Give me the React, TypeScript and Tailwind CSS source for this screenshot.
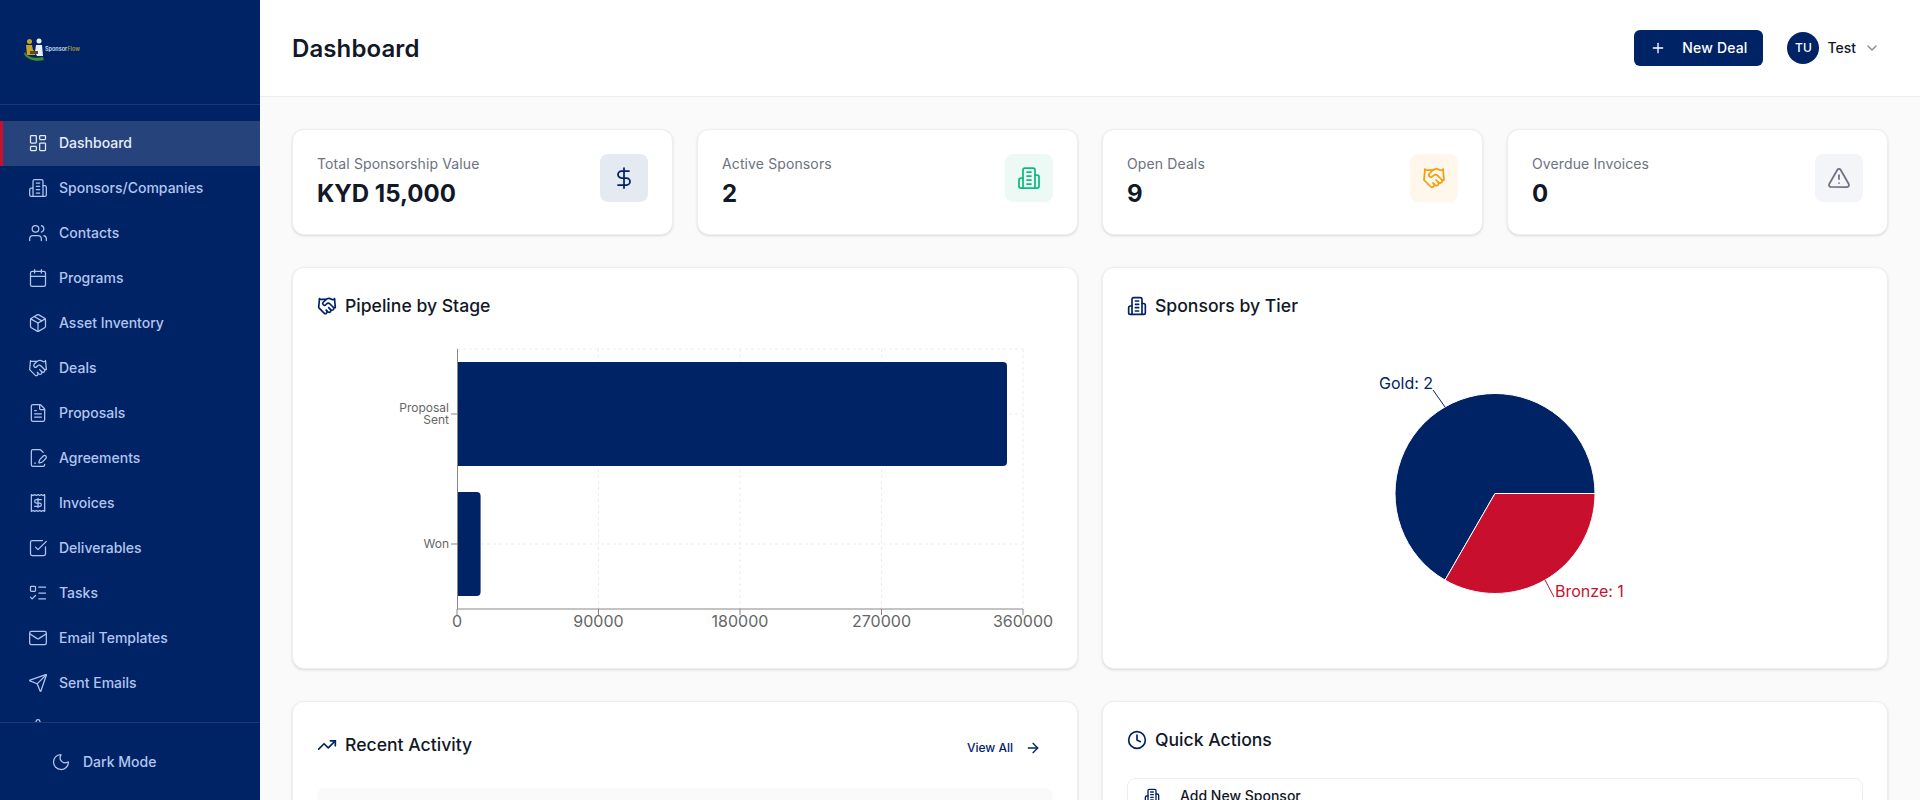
import {
  AlertTriangle,
  ArrowRight,
  Calendar,
  CheckSquare,
  ChevronDown,
  Clock,
  DollarSign,
  FileSignature,
  FileText,
  Handshake,
  LayoutDashboard,
  ListTodo,
  Mail,
  Moon,
  Package,
  Plus,
  Receipt,
  Send,
  Settings,
  TrendingUp,
  Users,
} from 'lucide-react';

// lucide's current Building2 has a door, the picture uses the older drawing
function Building({ className, strokeWidth = 2 }: { className?: string; strokeWidth?: number }) {
  return (
    <svg
      className={className}
      viewBox="0 0 24 24"
      fill="none"
      stroke="currentColor"
      strokeWidth={strokeWidth}
      strokeLinecap="round"
      strokeLinejoin="round"
    >
      <path d="M6 22V4a2 2 0 0 1 2-2h8a2 2 0 0 1 2 2v18Z" />
      <path d="M6 12H4a2 2 0 0 0-2 2v6a2 2 0 0 0 2 2h2" />
      <path d="M18 9h2a2 2 0 0 1 2 2v9a2 2 0 0 1-2 2h-2" />
      <path d="M10 6h4" />
      <path d="M10 10h4" />
      <path d="M10 14h4" />
      <path d="M10 18h4" />
    </svg>
  );
}

const navItems = [
  { label: 'Dashboard', icon: LayoutDashboard, active: true },
  { label: 'Sponsors/Companies', icon: Building },
  { label: 'Contacts', icon: Users },
  { label: 'Programs', icon: Calendar },
  { label: 'Asset Inventory', icon: Package },
  { label: 'Deals', icon: Handshake },
  { label: 'Proposals', icon: FileText },
  { label: 'Agreements', icon: FileSignature },
  { label: 'Invoices', icon: Receipt },
  { label: 'Deliverables', icon: CheckSquare },
  { label: 'Tasks', icon: ListTodo },
  { label: 'Email Templates', icon: Mail },
  { label: 'Sent Emails', icon: Send },
  { label: 'Settings', icon: Settings },
];

const stats = [
  { label: 'Total Sponsorship Value', value: 'KYD 15,000', icon: DollarSign, box: 'bg-[#e5e9f2]', color: 'text-[#002366]' },
  { label: 'Active Sponsors', value: '2', icon: Building, box: 'bg-[#ecf9f5]', color: 'text-[#10b981]' },
  { label: 'Open Deals', value: '9', icon: Handshake, box: 'bg-[#fff6ec]', color: 'text-[#f59e0b]' },
  { label: 'Overdue Invoices', value: '0', icon: AlertTriangle, box: 'bg-[#f3f5f9]', color: 'text-[#6b7280]' },
];

function Logo() {
  return (
    <svg width="56" height="24" viewBox="0 0 56 24" fill="none">
      <path d="M1 14c2 5 10 7 18 5l1 3c-8 2-17 0-20-6z" fill="#3f8f2f" />
      <circle cx="5.500" cy="3.500" r="2.500" fill="#c9a227" />
      <path d="M2 7h6l1 5 3 2-1 3H3z" fill="#c9a227" />
      <circle cx="15" cy="3" r="2.500" fill="#e8eefc" />
      <path d="M12 7h6l1 11h-6l-2-4z" fill="#e8eefc" />
      <path d="M6 13h8v3H6z" fill="#5b4a1e" />
      <text x="21" y="13" fontSize="5.500" fontWeight="600" fill="#d5def5" fontFamily="Inter, sans-serif">
        Sponsor
        <tspan fill="#a89a3c">Flow</tspan>
      </text>
    </svg>
  );
}

function Sidebar() {
  return (
    <aside className="flex h-full w-[260px] shrink-0 flex-col bg-[#002366]">
      <div className="flex h-[105px] shrink-0 items-center border-b border-white/10 pb-1 pl-6">
        <Logo />
      </div>
      <nav className="flex min-h-0 flex-1 flex-col overflow-hidden pt-4">
        {navItems.map((item) => (
          <div
            key={item.label}
            className={
              item.active
                ? 'flex h-[45px] shrink-0 items-center gap-3 border-l-[3px] border-[#c8102e] bg-white/15 pb-px pl-[25px] text-sm font-medium text-[#e6edfb]'
                : 'flex h-[45px] shrink-0 items-center gap-3 border-l-[3px] border-transparent pb-px pl-[25px] text-sm font-medium text-[#b3c5ee]'
            }
          >
            <item.icon className="h-5 w-5 shrink-0" strokeWidth={1.5} />
            <span className="-ml-px">{item.label}</span>
          </div>
        ))}
      </nav>
      <div className="flex h-[78px] shrink-0 items-center gap-3 border-t border-white/10 pl-[51px] text-sm font-medium text-[#b3c5ee]">
        <Moon className="h-5 w-5" strokeWidth={1.5} />
        Dark Mode
      </div>
    </aside>
  );
}

function Header() {
  return (
    <header className="flex h-[97px] shrink-0 items-center justify-between border-b border-[#eceef0] bg-white px-8">
      <h1 className="pt-0.5 text-2xl font-semibold tracking-[0.1px] text-[#111827]">Dashboard</h1>
      <div className="flex items-center gap-4">
        <button className="flex h-9 items-center gap-4 rounded-md bg-[#002366] px-4 text-sm font-medium tracking-[0.15px] text-white">
          <Plus className="h-4 w-4" /> New Deal
        </button>
        <div className="flex items-center gap-2 px-2">
          <div className="flex h-8 w-8 items-center justify-center rounded-full bg-[#002366] text-xs font-medium text-white">
            TU
          </div>
          <span className="text-sm font-medium text-[#111827]">Test</span>
          <ChevronDown className="h-4 w-4 text-[#888888]" />
        </div>
      </div>
    </header>
  );
}

function PipelineChart() {
  const xTicks = [
    { x: 457, label: '0' },
    { x: 598.5, label: '90000' },
    { x: 740, label: '180000' },
    { x: 881.5, label: '270000' },
    { x: 1023, label: '360000' },
  ];
  return (
    <svg className="block h-[300px] w-full" viewBox="317 344 736 300">
      <g stroke="#ececec" strokeDasharray="3 3">
        <line x1="457" y1="349" x2="1023" y2="349" />
        <line x1="457" y1="414" x2="1023" y2="414" />
        <line x1="457" y1="544" x2="1023" y2="544" />
        {xTicks.slice(1).map((t) => (
          <line key={t.x} x1={t.x} y1="349" x2={t.x} y2="609" />
        ))}
      </g>
      <path d="M457 362H1003a4 4 0 0 1 4 4V462a4 4 0 0 1-4 4H457z" fill="#002366" />
      <path d="M457 492H476.600a4 4 0 0 1 4 4V592a4 4 0 0 1-4 4H457z" fill="#002366" />
      <g stroke="#888888">
        <line x1="457.500" y1="349" x2="457.500" y2="609" />
        <line x1="457" y1="609" x2="1023" y2="609" />
        <line x1="451" y1="414" x2="457" y2="414" />
        <line x1="451" y1="544" x2="457" y2="544" />
        {xTicks.map((t) => (
          <line key={t.x} x1={t.x} y1="609" x2={t.x} y2="615" />
        ))}
      </g>
      <g fill="#666666" fontSize="12" fontFamily="Inter, sans-serif" textAnchor="end">
        <text x="449" y="412">Proposal</text>
        <text x="449" y="424">Sent</text>
        <text x="449" y="548">Won</text>
      </g>
      <g fill="#666666" fontSize="16" fontFamily="Inter, sans-serif" textAnchor="middle">
        {xTicks.map((t) => (
          <text key={t.x} x={t.x} y="627">
            {t.label}
          </text>
        ))}
      </g>
    </svg>
  );
}

function TierChart() {
  return (
    <svg className="block h-[300px] w-full" viewBox="1127 344 736 300">
      <path d="M1495 493.500L1595 493.500A100 100 0 1 0 1445 580.100Z" fill="#002366" stroke="#ffffff" />
      <path d="M1495 493.500L1445 580.100A100 100 0 0 0 1595 493.500Z" fill="#c8102e" stroke="#ffffff" />
      <path d="M1433 390L1445 407" stroke="#002366" fill="none" />
      <path d="M1545 580L1554 597" stroke="#c8102e" fill="none" />
      <text x="1379" y="389" fontSize="16" fontFamily="Inter, sans-serif" fill="#002366">
        Gold: 2
      </text>
      <text x="1555" y="597" fontSize="16" fontFamily="Inter, sans-serif" fill="#c8102e">
        Bronze: 1
      </text>
    </svg>
  );
}

export default function App() {
  return (
    <div className="flex h-screen overflow-hidden bg-[#fafafa] font-['Inter',sans-serif]">
      <Sidebar />
      <div className="flex min-w-0 flex-1 flex-col">
        <Header />
        <main className="min-h-0 flex-1 overflow-hidden p-8">
          <div className="mb-8 grid grid-cols-4 gap-6">
            {stats.map((s) => (
              <div
                key={s.label}
                className="flex items-start justify-between rounded-xl border border-[#eceef0] bg-white p-6 shadow-sm"
              >
                <div>
                  <p className="text-sm tracking-[0.12px] text-[#6b7280]">{s.label}</p>
                  <p className="mt-1 text-2xl leading-8 font-bold text-[#111827]">{s.value}</p>
                </div>
                <div className={`flex h-12 w-12 items-center justify-center rounded-lg ${s.box} ${s.color}`}>
                  <s.icon className="h-6 w-6" strokeWidth={1.75} />
                </div>
              </div>
            ))}
          </div>

          <div className="mb-8 grid grid-cols-2 gap-6">
            <div className="rounded-xl border border-[#eceef0] bg-white p-6 shadow-sm">
              <h2 className="mb-6 flex h-7 items-center gap-2 text-[17.6px] font-medium text-[#111827]">
                <Handshake className="h-5 w-5 text-[#002366]" /> Pipeline by Stage
              </h2>
              <PipelineChart />
            </div>
            <div className="rounded-xl border border-[#eceef0] bg-white p-6 shadow-sm">
              <h2 className="mb-6 flex h-7 items-center gap-2 text-[17.6px] font-medium text-[#111827]">
                <Building className="h-5 w-5 text-[#002366]" /> Sponsors by Tier
              </h2>
              <TierChart />
            </div>
          </div>

          <div className="grid grid-cols-2 gap-6">
            <div className="rounded-xl border border-[#eceef0] bg-white p-6 shadow-sm">
              <div className="mb-6 flex items-center justify-between">
                <h2 className="flex h-7 items-center gap-2 text-[17.6px] font-medium text-[#111827]">
                  <TrendingUp className="h-5 w-5 text-[#002366]" /> Recent Activity
                </h2>
                <button className="flex h-[38px] items-center gap-3 px-3 pt-[5px] text-xs font-medium text-[#002366]">
                  View All <ArrowRight className="h-4 w-4" />
                </button>
              </div>
              <div className="h-32 rounded-lg bg-[#fafafa]" />
            </div>
            <div className="rounded-xl border border-[#eceef0] bg-white p-6 shadow-sm">
              <h2 className="mb-6 flex h-7 items-center gap-2 text-[17.6px] font-medium text-[#111827]">
                <Clock className="h-5 w-5 text-[#002366]" /> Quick Actions
              </h2>
              <button className="flex h-9 w-full items-center gap-5 rounded-lg border border-[#eceef0] px-4 text-sm font-medium text-[#111827]">
                <Building className="h-4 w-4 text-[#002366]" /> Add New Sponsor
              </button>
            </div>
          </div>
        </main>
      </div>
    </div>
  );
}
